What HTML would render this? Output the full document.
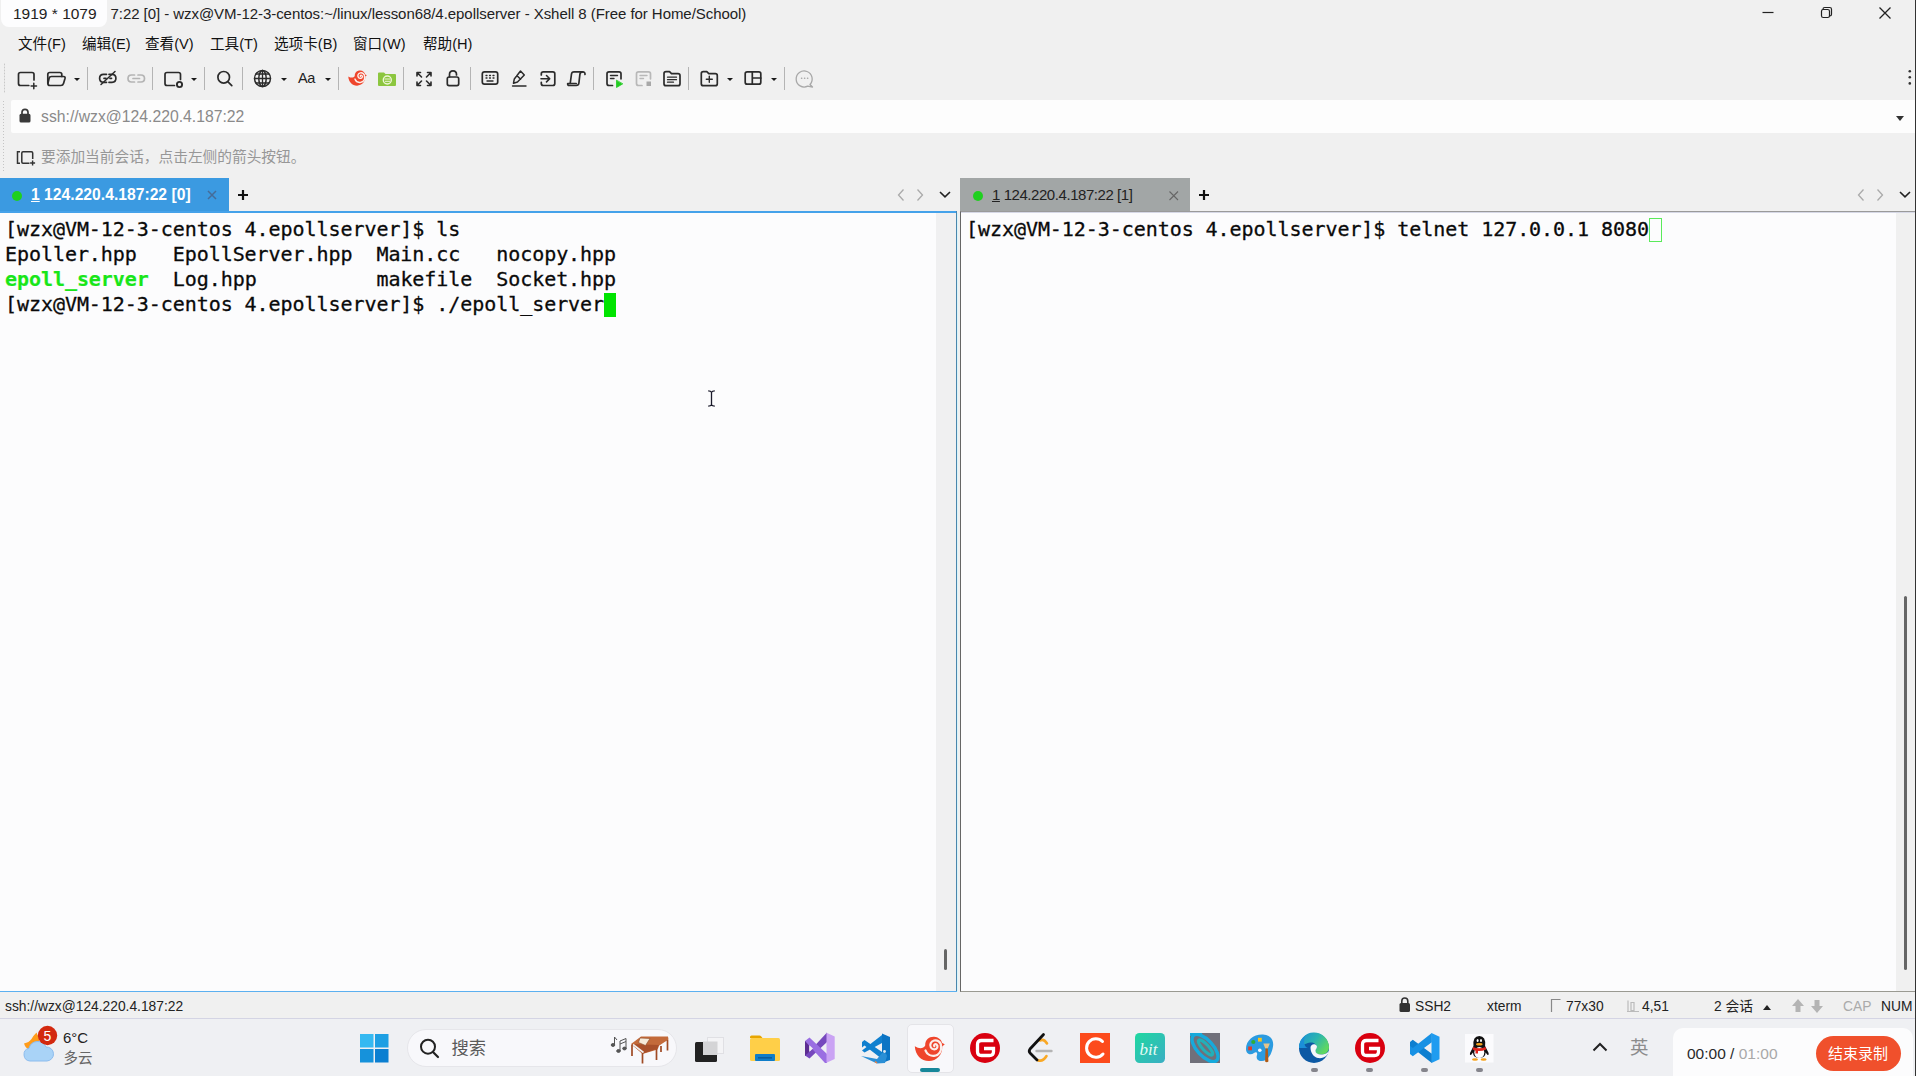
<!DOCTYPE html>
<html lang="zh-CN">
<head>
<meta charset="utf-8">
<title>Xshell 8</title>
<style>
*{box-sizing:border-box;margin:0;padding:0}
html,body{width:1916px;height:1076px;overflow:hidden}
body{position:relative;background:#f0f0f0;font-family:"Liberation Sans","Noto Sans CJK SC",sans-serif;color:#1a1a1a}
.abs{position:absolute}
.t{position:absolute;white-space:pre;line-height:1}
svg{position:absolute;overflow:visible}
.ic{fill:none;stroke:#2b2b2b;stroke-width:1.7;stroke-linecap:round;stroke-linejoin:round}
.sep{position:absolute;width:1px;top:67px;height:23px;background:#b4b4b4}
.dd{position:absolute;width:0;height:0;border-left:3.500px solid transparent;border-right:3.500px solid transparent;border-top:3.600px solid #1a1a1a;top:77.700px}
.term{position:absolute;font-family:"DejaVu Sans Mono","Liberation Mono",monospace;font-size:20px;line-height:25px;white-space:pre;color:#0a0a0a;letter-spacing:-0.060px;-webkit-text-stroke:0.300px #0a0a0a}
.term b{color:#19e619;font-weight:bold;-webkit-text-stroke:0.200px #19e619}
.mi{position:absolute;top:35.500px;font-size:14.600px;line-height:16px;white-space:pre;color:#111}
.sb{position:absolute;top:998.500px;font-size:13.800px;line-height:15px;white-space:pre;color:#222}
</style>
</head>
<body>

<!-- ===== title bar ===== -->
<div class="abs" id="sizetip" style="left:1px;top:-8px;width:106px;height:35px;background:#fdfdfe;border-radius:8px"></div>
<div class="t" id="sizetxt" style="left:13px;top:5.500px;font-size:15.500px;color:#222">1919 * 1079</div>
<div class="t" id="title" style="left:110.500px;top:6px;font-size:15px;color:#222;letter-spacing:-0.055px">7:22 [0] - wzx@VM-12-3-centos:~/linux/lesson68/4.epollserver - Xshell 8 (Free for Home/School)</div>
<svg style="left:1750px;top:0" width="166" height="28">
  <path d="M12.5 12.5h11" stroke="#222" stroke-width="1.2" fill="none"/>
  <rect x="71.5" y="9.500" width="8" height="8" rx="1.8" stroke="#222" stroke-width="1.2" fill="none"/>
  <path d="M73 10v-0.800q0-1.700 1.700-1.700h5.100q1.700 0 1.700 1.700v5.100q0 1.700-1.700 1.700h-0.800" stroke="#222" stroke-width="1.200" fill="none"/>
  <path d="M129.500 7.500l11 11M140.500 7.500l-11 11" stroke="#222" stroke-width="1.300" fill="none"/>
</svg>

<!-- ===== menu bar ===== -->
<div class="mi" style="left:18px">文件(F)</div>
<div class="mi" style="left:82px">编辑(E)</div>
<div class="mi" style="left:145px">查看(V)</div>
<div class="mi" style="left:210px">工具(T)</div>
<div class="mi" style="left:274px">选项卡(B)</div>
<div class="mi" style="left:353px">窗口(W)</div>
<div class="mi" style="left:423px">帮助(H)</div>

<!-- ===== toolbar ===== -->
<!--TB-->
<svg id="tbsvg" style="left:0;top:60px" width="1916" height="40" viewBox="0 60 1916 40">
<g class="ic">
  <!-- grip -->
  <path d="M4.500 64v30" stroke="#c8c8c8" stroke-width="1" stroke-dasharray="1 2"/>
  <!-- 1 new session -->
  <path d="M28.800 85.500h-8.300q-2 0-2-2v-9q0-2 2-2h11.500q2 0 2 2v5.500"/>
  <path d="M33.800 83.300v5.400M31.100 86h5.400" stroke-width="1.500"/>
  <!-- 2 open folder -->
  <path d="M47.800 83.500v-9q0-2 2-2h10q2 0 2 2v2"/>
  <path d="M51.500 76.500h12q2 0 1.500 2l-1.500 5q-0.600 2-2.600 2h-11q-2 0-2-2l1.200-5.200q0.500-1.800 2.400-1.800z"/>
  <!-- 5 disconnect -->
  <path d="M106.500 82.300h-3q-3.900 0-3.900-4t3.900-4h3"/>
  <path d="M109 74.300h3q3.900 0 3.900 4t-3.900 4h-3"/>
  <path d="M104 78.300h2M110 78.300h1.500"/>
  <path d="M115 71.500l-14 13" stroke-width="1.500"/>
  <!-- 6 link gray -->
  <g stroke="#b4b4b4">
    <path d="M134.500 82h-3q-3.500 0-3.500-3.500t3.500-3.500h3"/>
    <path d="M138 75h3q3.500 0 3.500 3.500t-3.500 3.500h-3"/>
    <path d="M133 78.500h6.500"/>
  </g>
  <!-- 8 rect + gear -->
  <path d="M174.500 85.500h-7.500q-2 0-2-2v-9q0-2 2-2h11.500q2 0 2 2v5"/>
  <circle cx="179.500" cy="84.500" r="2.600" stroke-width="1.900"/>
  <!-- 11 search -->
  <circle cx="223.700" cy="77.300" r="5.800"/>
  <path d="M228 81.800l3.800 3.800"/>
  <!-- 13 globe -->
  <g stroke-width="1.500">
  <circle cx="262.500" cy="78.500" r="8"/>
  <ellipse cx="262.500" cy="78.500" rx="3.700" ry="8"/>
  <path d="M262.500 70.500v16M254.500 78.500h16M256 74h13M256 83h13" stroke-width="1.300"/>
  </g>
  <!-- 21 fullscreen -->
  <g stroke-width="1.600">
  <path d="M417 76v-3.500h3.500M417.500 73l4 4"/>
  <path d="M431 76v-3.500h-3.500M430.500 73l-4 4"/>
  <path d="M417 81.500v3.500h3.500M417.500 84.500l4-4" transform="translate(0,0.500)"/>
  <path d="M431 81.500v3.500h-3.500M430.500 84.500l-4-4" transform="translate(0,0.500)"/>
  </g>
  <!-- 22 lock -->
  <rect x="447.300" y="77" width="11.400" height="8.600" rx="1.800"/>
  <path d="M449.500 77v-2.500q0-3.700 3.500-3.700t3.500 3.700v0.500"/>
  <!-- 24 keyboard -->
  <rect x="482.300" y="71.800" width="15.400" height="12.400" rx="2.200"/>
  <path d="M486 75.500h1M489.500 75.500h1M493 75.500h1M486 78h1M489.500 78h1M493 78h1" stroke-width="1.300"/>
  <path d="M487 81h6" stroke-width="1.400"/>
  <!-- 25 highlighter -->
  <path d="M520.500 71l3.800 4-6.800 7-4 1.200 0.800-4.200zM516.800 75.500l3.800 3.800" stroke-width="1.500"/>
  <path d="M512.500 86h13.500" stroke-width="1.400"/>
  <!-- 26 login -->
  <path d="M541.300 75v-1.200q0-2 2-2h9.500q2 0 2 2v9.700q0 2-2 2h-9.500q-2 0-2-2v-1.200"/>
  <path d="M541 78.700h8.500M546.500 75.500l3.200 3.200-3.200 3.200" stroke-width="1.600"/>
  <!-- 27 scroll -->
  <path d="M585 74.500q0.300-2.700-2.500-2.700h-8.500q-2.200 0-2.500 2.200l-1.300 9.500"/>
  <path d="M582.500 71.800q-2.300 0-2.600 2.500l-1 8.700q-0.300 2.500-2.700 2.500h-7q-1.800 0-1.500-2h8.500"/>
  <!-- 29 script play -->
  <path d="M612.500 85.500h-3.500q-2 0-2-2v-9.700q0-2 2-2h10q2 0 2 2v5"/>
  <path d="M610.500 75.500h7M610.500 78.500h3.500" stroke-width="1.400"/>
  <path d="M616.500 80.500v7l6-3.500z" fill="#22cc22" stroke="#22cc22" stroke-width="0.800"/>
  <!-- 30 script stop gray -->
  <g stroke="#b8b8b8">
  <path d="M642 85.500h-3.500q-2 0-2-2v-9.700q0-2 2-2h10q2 0 2 2v5"/>
  <path d="M640 75.500h7M640 78.500h3.500" stroke-width="1.400"/>
  <rect x="646.500" y="81.500" width="4.500" height="4.500" fill="#a8a8a8" stroke="none"/>
  </g>
  <!-- 31 folder lines -->
  <path d="M664 83.700v-10q0-2 2-2h3.500l2 2h6.500q2 0 2 2v8q0 2-2 2h-12q-2 0-2-2z"/>
  <path d="M667.500 77.200h9M667.500 79.700h9M667.500 82.200h6" stroke-width="1.300"/>
  <!-- 33 folder plus -->
  <path d="M701.300 83.700v-10q0-2 2-2h3.500l2 2h6.500q2 0 2 2v8q0 2-2 2h-12q-2 0-2-2z"/>
  <path d="M709.300 76.200v6M706.300 79.200h6" stroke-width="1.400"/>
  <!-- 35 layout -->
  <rect x="745.200" y="71.800" width="15.600" height="12.400" rx="2"/>
  <path d="M752.300 72v12M752.300 78h8.500"/>
  <!-- 38 chat bubble -->
  <g stroke="#a8a8a8" stroke-width="1.300">
  <path d="M810 84.500a8 8 0 1 0 -2.300 1.700l4.800 0.800z"/>
  <path d="M801.500 78.200h0.300M804.500 78.200h0.300M807.500 78.200h0.300" stroke-width="1.400"/>
  </g>
</g>
<!-- dots right -->
<g fill="#333"><circle cx="1909.800" cy="71.200" r="1.300"/><circle cx="1909.800" cy="77.300" r="1.300"/><circle cx="1909.800" cy="83.400" r="1.300"/></g>
<!-- xshell icon -->
<g transform="translate(348.300 70.400) scale(0.620)">
  <g transform="translate(-914.800 -1036.500)">
  <path d="M914.800 1046.200c4.500 2.800 8.500 2.600 10.400-0.800c-0.200-5.600 4-9 9-8.700c4 0.300 7 2.700 8 6.300l2.600 1.300-2.600 2.200c0.500 8-5.600 14.600-13.200 14.600c-8 0-13.700-6.400-14.200-14.900z" fill="#ef452c"/>
  <path d="M925.500 1050.500c1.500 4 5.500 6 9.500 5.200c4-0.900 6.600-4.500 6-8.700" fill="none" stroke="#fbeeea" stroke-width="2.300" stroke-linecap="round"/>
  <path d="M934.300 1046.200c-0.800-1.400 1-2.800 2.400-1.600c1.700 1.500 0.600 4.600-2.200 4.800c-3.200 0.200-5.200-3.200-3.800-6.200c1.300-2.800 5-3.800 7.800-2c2 1.300 2.800 3.400 2.500 5.600" fill="none" stroke="#fbeeea" stroke-width="2.300" stroke-linecap="round"/>
  </g>
</g>
<!-- xftp icon -->
<g>
  <path d="M378 73.500q0-1 1-1h5l1.500 1.500h9.500q1 0 1 1v10q0 1-1 1h-16q-1 0-1-1z" fill="#8cc63f"/>
  <circle cx="387.300" cy="80" r="4" fill="none" stroke="#eef7d8" stroke-width="1.400"/>
  <path d="M384.500 79h5.500M385 81.300h5" stroke="#eef7d8" stroke-width="1"/>
</g>
</svg>
<div class="sep" style="left:87px"></div>
<div class="sep" style="left:152px"></div>
<div class="sep" style="left:204px"></div>
<div class="sep" style="left:242px"></div>
<div class="sep" style="left:338px"></div>
<div class="sep" style="left:403px"></div>
<div class="sep" style="left:470px"></div>
<div class="sep" style="left:593px"></div>
<div class="sep" style="left:688px"></div>
<div class="sep" style="left:784px"></div>
<div class="dd" style="left:73.500px"></div>
<div class="dd" style="left:191px"></div>
<div class="dd" style="left:280.500px"></div>
<div class="dd" style="left:324.500px"></div>
<div class="dd" style="left:727px"></div>
<div class="dd" style="left:771px"></div>
<div class="t" id="aa" style="left:298px;top:71px;font-size:14.500px;color:#222;letter-spacing:-0.300px">Aa</div>
<!--/TB-->

<!-- ===== address bar ===== -->
<div class="abs" style="left:11px;top:100px;width:1905px;height:33px;background:#fdfdfd;border-radius:2px 0 0 2px"></div>
<div class="t" id="addr" style="left:41px;top:109px;font-size:15.750px;color:#8a8a8a">ssh://wzx@124.220.4.187:22</div>
<div class="abs" style="left:1896px;top:116px;width:0;height:0;border-left:4.500px solid transparent;border-right:4.500px solid transparent;border-top:5px solid #333"></div>


<svg style="left:18px;top:107px" width="14" height="18"><rect x="1.500" y="6.800" width="11" height="8.800" rx="1.600" fill="#3a3a3a"/><path d="M4 7.500v-2.200q0-3 3-3t3 3v2.200" fill="none" stroke="#3a3a3a" stroke-width="1.700"/></svg>
<svg style="left:15px;top:148px" width="22" height="20"><path d="M5 3.800h-2.500v11.400h2.500" fill="none" stroke="#333" stroke-width="1.500"/><path d="M14.500 15.200h-6.500q-1.200 0-1.200-1.200v-9q0-1.200 1.200-1.200h8.500q1.200 0 1.200 1.200v6" fill="none" stroke="#333" stroke-width="1.500"/><path d="M17.600 12.500v5M15.100 15h5" stroke="#333" stroke-width="1.400"/></svg>
<div class="abs" style="left:3px;top:101px;width:1px;height:70px;background-image:repeating-linear-gradient(#c4c4c4 0 1px,transparent 1px 3px)"></div>
<!-- ===== hint bar ===== -->
<div class="t" id="hint" style="left:41px;top:150px;font-size:14.700px;color:#979797">要添加当前会话，点击左侧的箭头按钮。</div>

<!-- ===== tabs ===== -->
<div class="abs" style="left:0;top:178px;width:229px;height:35px;background:#3b9ae1"></div>
<div class="abs" style="left:0;top:211px;width:957px;height:2px;background:#45a2ea"></div>
<div class="abs" style="left:12px;top:190.500px;width:10px;height:10px;border-radius:50%;background:#1fd01f"></div>
<div class="t" id="tab1" style="left:31px;top:186.500px;font-size:15.700px;color:#fff;font-weight:bold"><u>1</u> 124.220.4.187:22 [0]</div>
<svg style="left:206px;top:189px" width="12" height="12"><path d="M2 2l8 8M10 2l-8 8" stroke="#456c98" stroke-width="1.500" fill="none"/></svg>
<svg style="left:237px;top:188px" width="12" height="14"><path d="M6 2v10M1 7h10" stroke="#111" stroke-width="2.200" fill="none"/></svg>
<svg style="left:894px;top:186px" width="62" height="18"><path d="M9.500 3.500l-5 5.500 5 5.500" stroke="#aaa" stroke-width="1.300" fill="none"/><path d="M23.500 3.500l5 5.500-5 5.500" stroke="#aaa" stroke-width="1.300" fill="none"/><path d="M46 6l5 4.800 5-4.800" stroke="#222" stroke-width="1.600" fill="none"/></svg>

<div class="abs" style="left:960px;top:178px;width:230px;height:33px;background:#a2a6a6"></div>
<div class="abs" style="left:973px;top:190.500px;width:10px;height:10px;border-radius:50%;background:#1fd01f"></div>
<div class="t" id="tab2" style="left:992px;top:187px;font-size:15px;color:#222;letter-spacing:-0.440px"><u>1</u> 124.220.4.187:22 [1]</div>
<svg style="left:1168px;top:190px" width="12" height="12"><path d="M1.500 1.500l8.500 8.500M10 1.500l-8.500 8.500" stroke="#666" stroke-width="1.100" fill="none"/></svg>
<svg style="left:1198px;top:188px" width="12" height="14"><path d="M6 2v10M1 7h10" stroke="#111" stroke-width="2.200" fill="none"/></svg>
<svg style="left:1854px;top:186px" width="62" height="18"><path d="M9.500 3.500l-5 5.500 5 5.500" stroke="#aaa" stroke-width="1.300" fill="none"/><path d="M23.500 3.500l5 5.500-5 5.500" stroke="#aaa" stroke-width="1.300" fill="none"/><path d="M46 6l5 4.800 5-4.800" stroke="#222" stroke-width="1.600" fill="none"/></svg>

<!-- ===== panes ===== -->
<div class="abs" id="paneL" style="left:0;top:213px;width:936px;height:778px;background:#fcfcfd"></div>
<div class="abs" style="left:936px;top:213px;width:20px;height:778px;background:#f0f0f1"></div>
<div class="abs" style="left:956px;top:211px;width:1px;height:781px;background:#4a86ad"></div>
<div class="abs" style="left:957px;top:213px;width:1px;height:779px;background:#d8f4fa"></div>
<div class="abs" style="left:0;top:991px;width:957px;height:1px;background:#5cb0f0"></div>
<div class="abs" style="left:944px;top:949px;width:3px;height:21px;background:#666;border-radius:1.500px"></div>

<div class="abs" id="paneR" style="left:960px;top:211px;width:936px;height:781px;background:#fcfcfd;border-left:1px solid #666;border-top:1px solid #9a9a9a;border-bottom:1px solid #9a9a92"></div>
<div class="abs" style="left:961px;top:212px;width:954px;height:1px;background:#d6d8e6"></div>
<div class="abs" style="left:1896px;top:211px;width:19px;height:1px;background:#9a9a9a"></div>
<div class="abs" style="left:1896px;top:991px;width:19px;height:1px;background:#9a9a92"></div>
<div class="abs" style="left:1904px;top:596px;width:3px;height:374px;background:#666;border-radius:1.500px"></div>

<div class="term" id="termL" style="left:5px;top:217px">[wzx@VM-12-3-centos 4.epollserver]$ ls
Epoller.hpp   EpollServer.hpp  Main.cc   nocopy.hpp
<b>epoll_server</b>  Log.hpp          makefile  Socket.hpp
[wzx@VM-12-3-centos 4.epollserver]$ ./epoll_server</div>
<div class="abs" style="left:604px;top:293px;width:12px;height:24px;background:#00e400"></div>

<div class="term" id="termR" style="left:966px;top:217px">[wzx@VM-12-3-centos 4.epollserver]$ telnet 127.0.0.1 8080</div>
<div class="abs" style="left:1649px;top:218px;width:13px;height:24px;border:1.500px solid #5aea5a"></div>

<!-- mouse I-beam -->
<svg style="left:700px;top:385px" width="24" height="28" viewBox="700 385 24 28"><path d="M708.200 390.800q2.600 0 3.300 1.400q0.700-1.400 3.300-1.400M708.200 406.200q2.600 0 3.300-1.400q0.700 1.400 3.300 1.400M711.500 391.500v14" stroke="#1a1a2a" stroke-width="1.300" fill="none"/></svg>

<!-- ===== status bar ===== -->
<div class="sb" style="left:5px">ssh://wzx@124.220.4.187:22</div>
<!--SB-->
<svg style="left:1398px;top:996px" width="14" height="18"><rect x="1.500" y="7" width="10.500" height="9" rx="1.500" fill="#333"/><path d="M3.800 7.500v-2.500q0-3 3-3t3 3v2.500" fill="none" stroke="#333" stroke-width="1.600"/></svg>
<div class="sb" style="left:1415px" id="sb1">SSH2</div>
<div class="sb" style="left:1487px" id="sb2">xterm</div>
<svg style="left:1550px;top:998px" width="12" height="16"><path d="M1.500 14v-12.500h9" fill="none" stroke="#888" stroke-width="1.200"/></svg>
<div class="sb" style="left:1566px" id="sb3">77x30</div>
<svg style="left:1626px;top:999px" width="14" height="14"><path d="M2 1.500v11M5 3.500h3v8h-3zM1 12.500h12" fill="none" stroke="#bbb" stroke-width="1.200"/></svg>
<div class="sb" style="left:1642px" id="sb4">4,51</div>
<div class="sb" style="left:1714px" id="sb5">2 会话</div>
<div class="abs" style="left:1763px;top:1005px;width:0;height:0;border-left:4px solid transparent;border-right:4px solid transparent;border-bottom:5px solid #222"></div>
<svg style="left:1790px;top:998px" width="36" height="16"><path d="M8 1l6 7h-3.500v6h-5v-6h-3.500z" fill="#b4b4b4"/><path d="M27 15l6-7h-3.500v-6h-5v6h-3.500z" fill="#b4b4b4"/></svg>
<div class="sb" style="left:1843px;color:#aaa" id="sb6">CAP</div>
<div class="sb" style="left:1881px" id="sb7">NUM</div>
<div class="abs" style="left:0;top:1018px;width:1916px;height:1px;background:#d4d4e4"></div>
<!--/SB-->

<!-- ===== taskbar ===== -->
<div class="abs" style="left:0;top:1019px;width:1916px;height:57px;background:#eff0f3"></div>
<!--TK-->
<!-- weather -->
<svg style="left:20px;top:1024px" width="40" height="44" viewBox="20 1024 40 44">
  <path d="M24 1043.500q5-1 7.500-4.500q1.500-3 5-6.500q2 4 3 9q-1 8-10 8q-4-1-5.500-6z" fill="#ff9c1a"/>
  <path d="M30 1061a6.500 6.500 0 0 1 -1-12.800a9 9 0 0 1 17-1.200a7 7 0 0 1 1 14z" fill="#a9d3f7" stroke="#8cbcee" stroke-width="1"/>
  <circle cx="47.500" cy="1035.500" r="9.700" fill="#d3290f"/>
</svg>
<div class="t" style="left:43.500px;top:1028.500px;font-size:14px;color:#fff">5</div>
<div class="t" id="tw1" style="left:63px;top:1030px;font-size:15px;color:#222">6°C</div>
<div class="t" id="tw2" style="left:63.500px;top:1051px;font-size:14.500px;color:#666">多云</div>
<!-- windows logo -->
<svg style="left:360px;top:1034px" width="29" height="29">
  <rect x="0" y="0" width="13.500" height="13.500" fill="#35b9f1"/><rect x="15" y="0" width="13.500" height="13.500" fill="#1d9fe3"/>
  <rect x="0" y="15" width="13.500" height="13.500" fill="#1692db"/><rect x="15" y="15" width="13.500" height="13.500" fill="#0b7fd1"/>
</svg>
<!-- search pill -->
<div class="abs" style="left:407px;top:1029px;width:270px;height:38px;border-radius:19px;background:#f8f8fb;border:1px solid #e6e6ea"></div>
<svg style="left:418px;top:1036px" width="24" height="24"><circle cx="10" cy="10.700" r="7" fill="none" stroke="#222" stroke-width="2"/><path d="M15 16l5 5" stroke="#222" stroke-width="2.200" stroke-linecap="round"/></svg>
<div class="t" id="tsearch" style="left:451.500px;top:1040px;font-size:17.300px;color:#5a5a5a">搜索</div>
<!-- notes + piano -->
<svg style="left:608px;top:1032px" width="64" height="34" viewBox="608 1032 64 34">
  <g fill="#555" stroke="#555" stroke-width="1">
    <ellipse cx="613" cy="1045" rx="1.800" ry="1.400"/><path d="M614.500 1045v-8l2.500 3" fill="none"/>
    <ellipse cx="618.500" cy="1051" rx="1.800" ry="1.400"/><ellipse cx="624.500" cy="1048.500" rx="1.800" ry="1.400"/>
    <path d="M620 1051v-10l6-2.500v10M620 1044l6-2.500" fill="none"/>
  </g>
  <path d="M631 1044l10-7.500h27l0.500 3-10 6.500-1 3.500-15 4.500z" fill="#c36a3a"/>
  <path d="M631 1044l12 9.500 15-5 1-3.500z" fill="#a9502a"/>
  <path d="M640 1038l10 0.500-4.500 7-7-3z" fill="#f6ead8" stroke="#8a4a2a" stroke-width="0.600"/>
  <path d="M633 1044.500l10.500 8" stroke="#f0f0f0" stroke-width="1.600"/>
  <path d="M632 1045v11M642.500 1053v10.500M656.500 1049v11M661 1046v6M667.500 1040v10.500" stroke="#a04a24" stroke-width="1.700" fill="none"/>
</svg>
<!-- task view -->
<svg style="left:693px;top:1036px" width="34" height="28" viewBox="693 1036 34 28">
  <rect x="707.500" y="1037.500" width="16" height="16" fill="#f4f4f6" stroke="#e0e0e4" stroke-width="1"/>
  <rect x="695" y="1042" width="22" height="20" rx="1.500" fill="#222"/>
  <rect x="703" y="1041.500" width="14.500" height="13.500" fill="#d4d4d6"/>
</svg>
<!-- file explorer -->
<svg style="left:749px;top:1034px" width="32" height="28" viewBox="749 1034 32 28">
  <path d="M750 1037q0-1.500 1.500-1.500h8q1 0 1.800 1l1.200 1.500h-12.500z" fill="#e7a500"/>
  <rect x="750" y="1038" width="30" height="23" rx="1.500" fill="#ffcf48"/>
  <rect x="755" y="1054" width="20" height="7" rx="1" fill="#0f7dc9"/>
  <rect x="758" y="1057" width="14" height="1.600" fill="#0a5c9c"/>
</svg>
<!-- visual studio -->
<svg style="left:804px;top:1032px;overflow:hidden" width="32" height="32" viewBox="804 1032 32 32">
  <path d="M807.200 1041v15" stroke="#5c2d91" stroke-width="4.400" fill="none"/>
  <path d="M807.500 1053.500l-2.500 2 4.500 3 17.500-16.500v-9.500z" fill="#7648bd"/>
  <path d="M805 1041l4.500-3.500 17.500 16.500v9l-2 0z" fill="#9a6ee2"/>
  <path d="M826.500 1032.800l8.200 3.700v22.500l-8.200 3.800z" fill="#caa3f4"/>
  <path d="M809.400 1045.200l3.600 3.300-3.600 3.300z" fill="#efeff2"/>
</svg>
<!-- vscode insiders-ish -->
<svg style="left:860px;top:1032px" width="32" height="32" viewBox="860 1032 32 32">
  <path d="M882 1033.500l8 3.500v23l-8 3z" fill="#0b74c4"/>
  <path d="M862 1042l2.500-2 17.500 12v7l-17.500-13.500-2.500 2z" fill="#1080cf"/>
  <path d="M862 1050.500l20-15.500v8l-17.500 9.500z" fill="#1080cf"/>
  <path d="M861 1056l16 3 5-6q4-1 5 3l-2 7-8 0.500z" fill="#2b8fd6"/>
  <circle cx="884.500" cy="1051.500" r="1.400" fill="#dfe8f0"/>
  <path d="M875 1061.500l2 1.500" stroke="#f08040" stroke-width="1.500"/>
</svg>
<!-- xshell (active) -->
<div class="abs" style="left:907px;top:1024px;width:47px;height:49px;border-radius:5px;background:#f8f8fb;border:1px solid #e4e4e8"></div>
<svg style="left:913px;top:1035px" width="34" height="28" viewBox="913 1035 34 28">
  <path d="M914.800 1046.200c4.500 2.800 8.500 2.600 10.400-0.800c-0.200-5.600 4-9 9-8.700c4 0.300 7 2.700 8 6.300l2.600 1.300-2.600 2.200c0.500 8-5.600 14.600-13.200 14.600c-8 0-13.700-6.400-14.200-14.900z" fill="#ef452c"/>
  <path d="M925.500 1050.500c1.500 4 5.500 6 9.500 5.200c4-0.900 6.600-4.500 6-8.700" fill="none" stroke="#fbeeea" stroke-width="2.200" stroke-linecap="round"/>
  <path d="M934.300 1046.200c-0.800-1.400 1-2.800 2.400-1.600c1.700 1.500 0.600 4.600-2.200 4.800c-3.200 0.200-5.200-3.200-3.800-6.200c1.300-2.800 5-3.800 7.800-2c2 1.300 2.800 3.400 2.500 5.600" fill="none" stroke="#fbeeea" stroke-width="2.200" stroke-linecap="round"/>
</svg>
<div class="abs" style="left:920px;top:1068px;width:20px;height:4px;border-radius:2px;background:#17879a"></div>
<!-- gitee 1 -->
<svg style="left:969px;top:1032px" width="32" height="32" viewBox="-16 -16 32 32" id="gitee1">
  <circle r="15" fill="#d9000f"/>
  <path d="M8.500-7.500h-12q-4 0-4 4v7q0 4 4 4h8q4 0 4-4v-3h-9.500" fill="none" stroke="#fff" stroke-width="3.300"/>
</svg>
<!-- leetcode -->
<svg style="left:1025px;top:1031px" width="32" height="34" viewBox="1025 1031 32 34">
  <path d="M1036.500 1051h15" stroke="#b4b4b4" stroke-width="2.400" stroke-linecap="round"/>
  <path d="M1040 1040.500q4-2 7 3" fill="none" stroke="#f9a825" stroke-width="2.600" stroke-linecap="round"/>
  <path d="M1037.500 1060q5 2.500 9-4" fill="none" stroke="#f9a825" stroke-width="2.600" stroke-linecap="round"/>
  <path d="M1043.500 1034.500l-13.500 14.500q-1.500 2 0 4l7 7" fill="none" stroke="#111" stroke-width="2.800" stroke-linecap="round" stroke-linejoin="round"/>
</svg>
<!-- csdn -->
<svg style="left:1080px;top:1033px" width="30" height="30"><rect width="30" height="30" fill="#fc4b1c"/><path d="M22.500 8.500a9.300 9.300 0 1 0 0.500 12.500" fill="none" stroke="#fff" stroke-width="3" stroke-linecap="round"/></svg>
<!-- bit -->
<svg style="left:1135px;top:1033px" width="30" height="30"><defs><linearGradient id="gb" x1="0" y1="0" x2="1" y2="1"><stop offset="0" stop-color="#1fd8a0"/><stop offset="1" stop-color="#3aaec4"/></linearGradient></defs><rect width="30" height="30" rx="4.500" fill="url(#gb)"/><text x="4.500" y="21.500" font-family="Liberation Serif, serif" font-style="italic" font-size="17" fill="#e8fbf6">bit</text></svg>
<!-- gray planet icon -->
<svg style="left:1190px;top:1033px;overflow:hidden" width="30" height="30"><rect width="30" height="30" fill="#70707a"/><g fill="none" stroke="#16aadc" stroke-width="3.400"><ellipse cx="15" cy="15" rx="17" ry="8" transform="rotate(47 15 15)"/><ellipse cx="15.500" cy="14.500" rx="10" ry="3" transform="rotate(47 15.500 14.500)" stroke="#22b0b8" stroke-width="3"/></g><path d="M0 3v-3h12" stroke="#16aadc" stroke-width="3" fill="none"/></svg>
<!-- paint -->
<svg style="left:1244px;top:1032px" width="32" height="34" viewBox="1244 1032 32 34">
  <path d="M1246 1049c0-9 8-15 17-14.500c8 0.500 11 6 10 12c-1 6-4 14-11 14.500c-5 0.300-6-3-5-6c0.800-2.500-1-3.500-3-2c-3 2.300-8 1.500-8-4z" fill="#2b9be0"/>
  <rect x="1248.200" y="1046.500" width="3.800" height="3.800" fill="#e03c28"/>
  <circle cx="1253.300" cy="1042" r="2.100" fill="#2fae34"/>
  <rect x="1258" y="1037.800" width="3.800" height="3.800" fill="#f7c51e"/>
  <circle cx="1259.800" cy="1050.300" r="1.800" fill="#f4f8fc"/>
  <path d="M1263.300 1043.500h6.500l-2 5h-2.500z" fill="#e8c48a"/>
  <path d="M1265.500 1048.500h2.300l0.600 13q-1.700 1.500-3.300 0z" fill="#b05a14"/>
</svg>
<!-- edge -->
<svg style="left:1298px;top:1032px" width="32" height="32" viewBox="-16 -16 32 32" id="edge1">
  <defs><linearGradient id="ge" x1="0" y1="0" x2="1" y2="0.600"><stop offset="0" stop-color="#1b8fd8"/><stop offset="0.550" stop-color="#2bb5b0"/><stop offset="1" stop-color="#5fd860"/></linearGradient></defs>
  <circle r="15" fill="#0c59a4"/>
  <path d="M-15 0a15 15 0 0 1 30 -1c0 5-3.500 7.500-8 7.500c-4 0-6-1.500-6-3.500c0-1.500 1.500-2 1.500-4c0-3-3-5-6.500-4.500c-6 1-10 5-11 5.500z" fill="url(#ge)"/>
  <path d="M-15 0a15 15 0 0 1 6-12c-2 5-1 11 3 12z" fill="#1b8fd8"/>
  <path d="M-3.500-0.500c0-3 4-4.500 6-2c1.500 2-1 3.500-1 5.500c0 2.500 3 4 7 3.500c3-0.400 5.500-2 6.500-3.500c-0.500 4-5 8-11 7c-5-1-7.500-6-7.500-10.500z" fill="#f4f6fa"/>
</svg>
<!-- gitee 2 -->
<svg style="left:1354px;top:1032px" width="32" height="32" viewBox="-16 -16 32 32">
  <circle r="15" fill="#d9000f"/>
  <path d="M8.500-7.500h-12q-4 0-4 4v7q0 4 4 4h8q4 0 4-4v-3h-9.500" fill="none" stroke="#fff" stroke-width="3.300"/>
</svg>
<!-- vscode -->
<svg style="left:1408px;top:1032px" width="34" height="32" viewBox="1408 1032 34 32">
  <path d="M1431.500 1033l8 3.800v22.400l-8 3.800z" fill="#1f9cf0"/>
  <path d="M1410 1042l2.800-2.300 19 14v9.300l-19-15-2.800 2z" fill="#0d7fd0"/>
  <path d="M1410 1054l2.800 2.300 19-14v-9.300l-19 15-2.800-2z" fill="#1791e4"/>
</svg>
<!-- qq -->
<svg style="left:1465px;top:1034px" width="29" height="29" viewBox="1465 1034 29 29">
  <rect x="1465" y="1034" width="28.500" height="28.500" fill="#fbfbfd"/>
  <path d="M1470 1053l3.500-7q-1-10 5.800-10q6.800 0 5.800 10l3.500 7q0.500 2.500-1 2l-2-2.500q0 5-6.300 5.500q-6.300-0.500-6.300-5.500l-2 2.500q-1.500 0.500-1-2z" fill="#111"/>
  <ellipse cx="1479.300" cy="1052.500" rx="5" ry="5.500" fill="#fff"/>
  <path d="M1473 1047q6 2.500 12.600 0l0.500 2.500q-7 3-13.600 0z" fill="#e0241c"/>
  <path d="M1475.500 1049.500h2.500v4h-2.500z" fill="#e0241c"/>
  <ellipse cx="1479.300" cy="1044.300" rx="3.300" ry="1.200" fill="#f5a21a"/>
  <ellipse cx="1477.600" cy="1040.500" rx="1" ry="1.500" fill="#fff"/><ellipse cx="1481" cy="1040.500" rx="1" ry="1.500" fill="#fff"/>
  <ellipse cx="1475" cy="1059.500" rx="3" ry="1.200" fill="#f5a21a"/><ellipse cx="1483.600" cy="1059.500" rx="3" ry="1.200" fill="#f5a21a"/>
</svg>
<!-- running indicators -->
<div class="abs" style="left:1311px;top:1068px;width:7px;height:3.500px;border-radius:2px;background:#85858c"></div>
<div class="abs" style="left:1366px;top:1068px;width:7px;height:3.500px;border-radius:2px;background:#85858c"></div>
<div class="abs" style="left:1421px;top:1068px;width:7px;height:3.500px;border-radius:2px;background:#85858c"></div>
<div class="abs" style="left:1476px;top:1068px;width:7px;height:3.500px;border-radius:2px;background:#85858c"></div>
<!-- tray -->
<svg style="left:1590px;top:1040px" width="20" height="14"><path d="M3.500 10.500l6.500-6.500l6.500 6.500" fill="none" stroke="#222" stroke-width="2" stroke-linejoin="miter"/></svg>
<div class="t" id="ime" style="left:1630px;top:1039px;font-size:18.500px;color:#8c8c8c">英</div>
<!-- recorder -->
<div class="abs" style="left:1673px;top:1028px;width:240px;height:50px;border-radius:10px 10px 0 0;background:#fcfcfd"></div>
<div class="t" id="rec" style="left:1687px;top:1046px;font-size:15.500px;color:#2a2a2a">00:00 / <span style="color:#a8a8a8">01:00</span></div>
<div class="abs" style="left:1816px;top:1036px;width:85px;height:35px;border-radius:17.500px;background:#f0502c"></div>
<div class="t" id="recbtn" style="left:1828px;top:1046px;font-size:15px;color:#fff">结束录制</div>
<!--/TK-->

<div class="abs" style="left:1915px;top:0;width:1px;height:1076px;background:#333"></div>
</body>
</html>
